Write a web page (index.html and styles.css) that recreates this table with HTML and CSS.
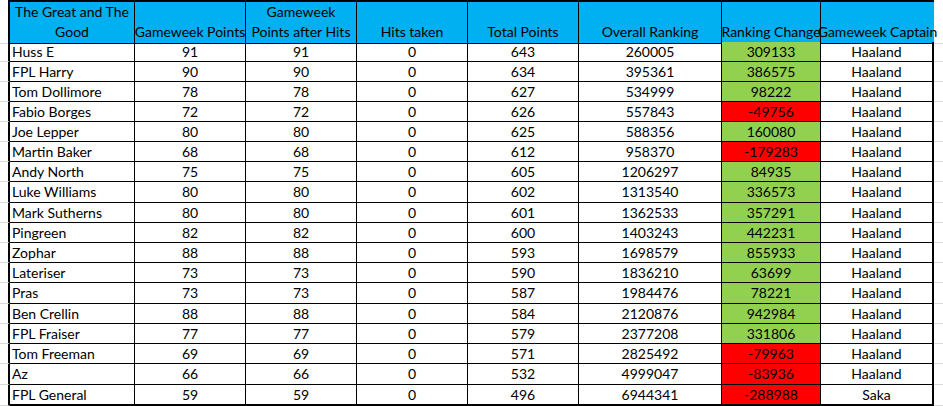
FILE: index.html
```html
<!DOCTYPE html>
<html>
<head>
<meta charset="utf-8">
<link rel="stylesheet" href="styles.css">
</head>
<body>
<div class="sheet">
  <div class="row head">
    <div class="gut-l"></div>
    <div class="c wrap">The Great and The Good</div>
    <div class="c">Gameweek Points</div>
    <div class="c wrap">Gameweek Points after Hits</div>
    <div class="c">Hits taken</div>
    <div class="c">Total Points</div>
    <div class="c">Overall Ranking</div>
    <div class="c">Ranking Change</div>
    <div class="c last">Gameweek Captain</div>
    <div class="gut-r"></div>
  </div>
  <div class="row"><div class="gut-l"></div><div class="c name">Huss E</div><div class="c">91</div><div class="c">91</div><div class="c">0</div><div class="c">643</div><div class="c">260005</div><div class="c pos">309133</div><div class="c last">Haaland</div><div class="gut-r"></div></div>
  <div class="row"><div class="gut-l"></div><div class="c name">FPL Harry</div><div class="c">90</div><div class="c">90</div><div class="c">0</div><div class="c">634</div><div class="c">395361</div><div class="c pos">386575</div><div class="c last">Haaland</div><div class="gut-r"></div></div>
  <div class="row"><div class="gut-l"></div><div class="c name">Tom Dollimore</div><div class="c">78</div><div class="c">78</div><div class="c">0</div><div class="c">627</div><div class="c">534999</div><div class="c pos">98222</div><div class="c last">Haaland</div><div class="gut-r"></div></div>
  <div class="row"><div class="gut-l"></div><div class="c name">Fabio Borges</div><div class="c">72</div><div class="c">72</div><div class="c">0</div><div class="c">626</div><div class="c">557843</div><div class="c neg">-49756</div><div class="c last">Haaland</div><div class="gut-r"></div></div>
  <div class="row"><div class="gut-l"></div><div class="c name">Joe Lepper</div><div class="c">80</div><div class="c">80</div><div class="c">0</div><div class="c">625</div><div class="c">588356</div><div class="c pos">160080</div><div class="c last">Haaland</div><div class="gut-r"></div></div>
  <div class="row"><div class="gut-l"></div><div class="c name">Martin Baker</div><div class="c">68</div><div class="c">68</div><div class="c">0</div><div class="c">612</div><div class="c">958370</div><div class="c neg">-179283</div><div class="c last">Haaland</div><div class="gut-r"></div></div>
  <div class="row"><div class="gut-l"></div><div class="c name">Andy North</div><div class="c">75</div><div class="c">75</div><div class="c">0</div><div class="c">605</div><div class="c">1206297</div><div class="c pos">84935</div><div class="c last">Haaland</div><div class="gut-r"></div></div>
  <div class="row tall"><div class="gut-l"></div><div class="c name">Luke Williams</div><div class="c">80</div><div class="c">80</div><div class="c">0</div><div class="c">602</div><div class="c">1313540</div><div class="c pos">336573</div><div class="c last">Haaland</div><div class="gut-r"></div></div>
  <div class="row"><div class="gut-l"></div><div class="c name">Mark Sutherns</div><div class="c">80</div><div class="c">80</div><div class="c">0</div><div class="c">601</div><div class="c">1362533</div><div class="c pos">357291</div><div class="c last">Haaland</div><div class="gut-r"></div></div>
  <div class="row"><div class="gut-l"></div><div class="c name">Pingreen</div><div class="c">82</div><div class="c">82</div><div class="c">0</div><div class="c">600</div><div class="c">1403243</div><div class="c pos">442231</div><div class="c last">Haaland</div><div class="gut-r"></div></div>
  <div class="row"><div class="gut-l"></div><div class="c name">Zophar</div><div class="c">88</div><div class="c">88</div><div class="c">0</div><div class="c">593</div><div class="c">1698579</div><div class="c pos">855933</div><div class="c last">Haaland</div><div class="gut-r"></div></div>
  <div class="row"><div class="gut-l"></div><div class="c name">Lateriser</div><div class="c">73</div><div class="c">73</div><div class="c">0</div><div class="c">590</div><div class="c">1836210</div><div class="c pos">63699</div><div class="c last">Haaland</div><div class="gut-r"></div></div>
  <div class="row tall"><div class="gut-l"></div><div class="c name">Pras</div><div class="c">73</div><div class="c">73</div><div class="c">0</div><div class="c">587</div><div class="c">1984476</div><div class="c pos">78221</div><div class="c last">Haaland</div><div class="gut-r"></div></div>
  <div class="row"><div class="gut-l"></div><div class="c name">Ben Crellin</div><div class="c">88</div><div class="c">88</div><div class="c">0</div><div class="c">584</div><div class="c">2120876</div><div class="c pos">942984</div><div class="c last">Haaland</div><div class="gut-r"></div></div>
  <div class="row"><div class="gut-l"></div><div class="c name">FPL Fraiser</div><div class="c">77</div><div class="c">77</div><div class="c">0</div><div class="c">579</div><div class="c">2377208</div><div class="c pos">331806</div><div class="c last">Haaland</div><div class="gut-r"></div></div>
  <div class="row"><div class="gut-l"></div><div class="c name">Tom Freeman</div><div class="c">69</div><div class="c">69</div><div class="c">0</div><div class="c">571</div><div class="c">2825492</div><div class="c neg">-79963</div><div class="c last">Haaland</div><div class="gut-r"></div></div>
  <div class="row tall"><div class="gut-l"></div><div class="c name">Az</div><div class="c">66</div><div class="c">66</div><div class="c">0</div><div class="c">532</div><div class="c">4999047</div><div class="c neg">-83936</div><div class="c last">Haaland</div><div class="gut-r"></div></div>
  <div class="row end"><div class="gut-l"></div><div class="c name">FPL General</div><div class="c">59</div><div class="c">59</div><div class="c">0</div><div class="c">496</div><div class="c">6944341</div><div class="c neg">-288988</div><div class="c last">Saka</div><div class="gut-r"></div></div>
</div>
</body>
</html>
```
FILE: styles.css
```css
html, body {
  margin: 0;
  padding: 0;
  background: #fff;
}
body {
  font-family: Lato, "Liberation Sans", sans-serif;
  font-size: 14px;
  color: #000;
  width: 943px;
  height: 406px;
  overflow: hidden;
}
.row {
  display: grid;
  grid-template-columns: 10px 125px 111px 111px 111px 111px 143px 99px 113px 1fr;
  height: 20px;
}
.row.tall { height: 21px; }
.row > div {
  box-sizing: border-box;
  border-bottom: 1px solid #000;
  line-height: 18px;
  white-space: nowrap;
}
.row > .gut-l {
  border-right: 2px solid #000;
  border-bottom-color: #dadada;
}
.row > .gut-r {
  border-bottom-color: #dadada;
}
.c {
  border-right: 1px solid #000;
  text-align: center;
  padding-top: 1px;
}
.c.name {
  text-align: left;
  padding-left: 2px;
}
.c.last {
  border-right: 2px solid #000;
}
.pos { background: #92d050; }
.neg { background: #ff0000; }

.row.head {
  height: 42px;
}
.row.head > .c {
  background: #00b0f0;
  border-top: 2px solid #000;
  display: flex;
  align-items: flex-end;
  justify-content: center;
  line-height: 20px;
  padding: 0 0 1px;
  white-space: nowrap;
}
.row.head > .c.wrap {
  white-space: normal;
  text-align: center;
}
.row.head > .c.last {
  border-right: 0;
}
.row.end {
  height: 21px;
}
.row.end > .c {
  border-bottom-width: 2px;
}
```
